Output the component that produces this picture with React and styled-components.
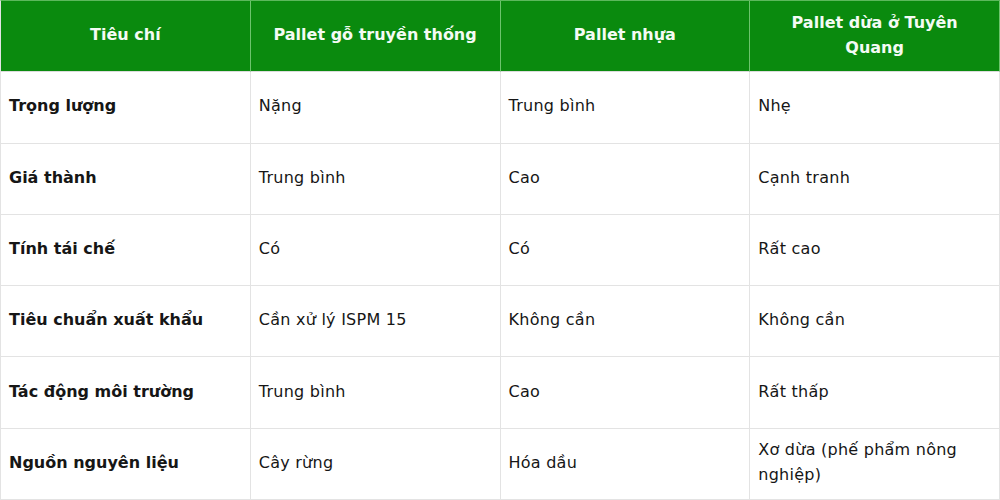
import React from "react";
import styled, { createGlobalStyle } from "styled-components";

const Global = createGlobalStyle`
  html, body { margin: 0; padding: 0; background: #fff; }
  body { font-family: "DejaVu Sans", "Noto Sans", sans-serif; }
`;

const Table = styled.div`
  width: 1000px;
  height: 500px;
  box-sizing: border-box;
  display: grid;
  grid-template-columns: repeat(4, 1fr);
  grid-template-rows: repeat(7, 1fr);
  border-left: 1px solid #e3e3e3;
  border-top: 1px solid #5cb85c;
`;

const Head = styled.div`
  background: #0a8a0e;
  color: #f4fbf4;
  font-weight: bold;
  font-size: 16px;
  line-height: 25px;
  text-align: center;
  display: flex;
  align-items: center;
  justify-content: center;
  padding: 0 10px 3px;
  box-sizing: border-box;
  border-right: 1px solid #6cc46c;
  border-bottom: 1px solid #dcdcdc;
`;

const Cell = styled.div`
  color: #161616;
  font-size: 16px;
  line-height: 25px;
  font-weight: ${(p) => (p.$bold ? "bold" : "normal")};
  letter-spacing: ${(p) => (p.$bold ? "0" : "0.25px")};
  display: flex;
  align-items: center;
  padding: 0 8px 3px;
  box-sizing: border-box;
  border-right: 1px solid #e3e3e3;
  border-bottom: 1px solid #e3e3e3;
`;

const headers = [
  "Tiêu chí",
  "Pallet gỗ truyền thống",
  "Pallet nhựa",
  <>Pallet dừa ở Tuyên<br />Quang</>,
];

const rows = [
  ["Trọng lượng", "Nặng", "Trung bình", "Nhẹ"],
  ["Giá thành", "Trung bình", "Cao", "Cạnh tranh"],
  ["Tính tái chế", "Có", "Có", "Rất cao"],
  ["Tiêu chuẩn xuất khẩu", "Cần xử lý ISPM 15", "Không cần", "Không cần"],
  ["Tác động môi trường", "Trung bình", "Cao", "Rất thấp"],
  ["Nguồn nguyên liệu", "Cây rừng", "Hóa dầu", <>Xơ dừa (phế phẩm nông<br />nghiệp)</>],
];

export default function App() {
  return (
    <>
      <Global />
      <Table>
        {headers.map((h, i) => (
          <Head key={i}>{h}</Head>
        ))}
        {rows.map((r, i) =>
          r.map((c, j) => (
            <Cell key={i + "-" + j} $bold={j === 0}>
              <span>{c}</span>
            </Cell>
          ))
        )}
      </Table>
    </>
  );
}
